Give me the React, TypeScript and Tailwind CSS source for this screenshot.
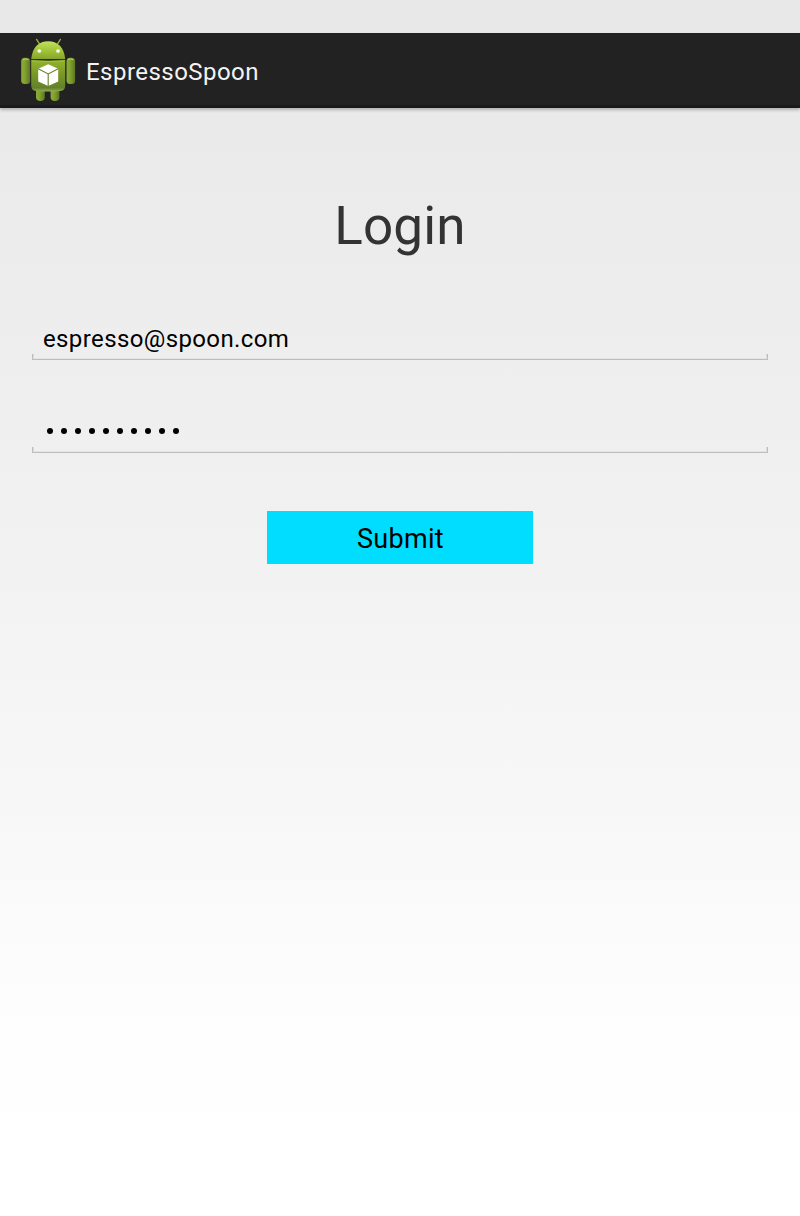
const FIELD_LINE =
  "h-[6px] border border-t-0 border-[#bdbdbd] shadow-[inset_0_-1px_0_#e4e4e4,inset_1px_0_0_#dadada,inset_-1px_0_0_#dadada]";

function RobotIcon() {
  return (
    <svg viewBox="0 0 64 64" className="mt-1 size-16 overflow-visible">
      <defs>
        <linearGradient id="torso" x1="0" y1="0" x2="0" y2="1">
          <stop offset="0" stopColor="#93b32c" />
          <stop offset="0.5" stopColor="#769625" />
          <stop offset="0.88" stopColor="#64812a" />
          <stop offset="1" stopColor="#93b052" />
        </linearGradient>
        <linearGradient id="head" x1="0" y1="0" x2="0" y2="1">
          <stop offset="0" stopColor="#c3e060" />
          <stop offset="0.45" stopColor="#a6c93b" />
          <stop offset="1" stopColor="#86a52b" />
        </linearGradient>
        <linearGradient id="limb" x1="0" y1="0" x2="1" y2="0">
          <stop offset="0" stopColor="#8bac36" />
          <stop offset="0.4" stopColor="#83a22f" />
          <stop offset="1" stopColor="#5c7723" />
        </linearGradient>
        <radialGradient id="glow">
          <stop offset="0" stopColor="#fff" />
          <stop offset="0.45" stopColor="#fff" />
          <stop offset="1" stopColor="#e4f3a6" stopOpacity="0" />
        </radialGradient>
      </defs>
      <path d="M20.6 2.4l3 4.8M44.4 2.4l-3 4.8" stroke="#91b333" strokeWidth="1.4" strokeLinecap="round" />
      <path d="M20 50h8.8v10.3q0 3.7-4.4 3.7T20 60.3z" fill="url(#limb)" />
      <path d="M34.6 50h8.8v10.3q0 3.7-4.4 3.7t-4.4-3.7z" fill="url(#limb)" />
      <rect x="5.2" y="20.8" width="9" height="26.2" rx="3.5" fill="url(#limb)" />
      <rect x="50.5" y="20.8" width="8.6" height="26.2" rx="3.5" fill="url(#limb)" />
      <path d="M7 22.8q2.8-1.8 5.6 0M52 22.8q2.8-1.8 5.6 0" fill="none" stroke="#b6d765" />
      <path d="M15.2 23h34v25.5q0 5-5 5.5-12 1.2-24 0-5-.5-5-5.500z" fill="url(#torso)" />
      <path d="M15.2 22C16.5 10 23 4.3 32.2 4.3S48 10 49.2 22z" fill="url(#head)" />
      <path d="M15.2 22.5q17 1.2 34 0" fill="none" stroke="#33420f" strokeWidth="1.2" />
      <path d="M16 23.9q16.500 1.200 32.500 0" fill="none" stroke="#abc956" strokeWidth="0.7" />
      <circle cx="23.3" cy="14" r="2.5" fill="url(#glow)" />
      <circle cx="42" cy="14" r="2.5" fill="url(#glow)" />
      <path d="M32.2 27.3l10 4.500v12.600l-10 4.700-10-4.700V31.800z" fill="#fff" />
      <path d="M22.2 31.800l10 5.200 10-5.200M32.200 37v12" fill="none" stroke="#65812a" strokeWidth="1.1" />
    </svg>
  );
}

export default function App() {
  return (
    <div className="flex h-[1216px] w-[800px] flex-col overflow-hidden bg-[linear-gradient(to_bottom,#e8e8e8_0%,#efefef_34%,#f3f3f3_50%,#f7f7f7_65%,#fdfdfd_82%,#ffffff_94%)] font-['Roboto',sans-serif] text-black">
      <header className="mt-[33px] flex h-[75px] shrink-0 border-b-3 border-[#1a1a1a] bg-[#222222] pl-4 shadow-[0_2px_3px_rgba(0,0,0,0.25)]">
        <RobotIcon />
        <span className="ml-1.5 mt-[25px] text-[24px] leading-7 tracking-[0.46px] text-[#f3f3f3]">EspressoSpoon</span>
      </header>
      <main className="flex flex-col px-8">
        <h1 className="mt-[87px] text-center text-[53px] leading-[62px] tracking-[0.2px] text-[#333333]">Login</h1>
        <div className="mt-[68px] h-[29px] pl-[11px] text-[24px] leading-7 tracking-[0.38px]">espresso@spoon.com</div>
        <div className={FIELD_LINE} />
        <div className="mt-[50px] flex h-[37px] items-center gap-2 pl-[15px] pt-1">
          {Array.from({ length: 10 }, (_, i) => (
            <span key={i} className="size-[6px] rounded-full bg-black" />
          ))}
        </div>
        <div className={FIELD_LINE} />
        <button className="mt-[58px] h-[53px] w-[266px] self-center bg-[#00ddff] pt-1 pl-px text-[27px] tracking-[0.3px]">Submit</button>
      </main>
    </div>
  );
}
